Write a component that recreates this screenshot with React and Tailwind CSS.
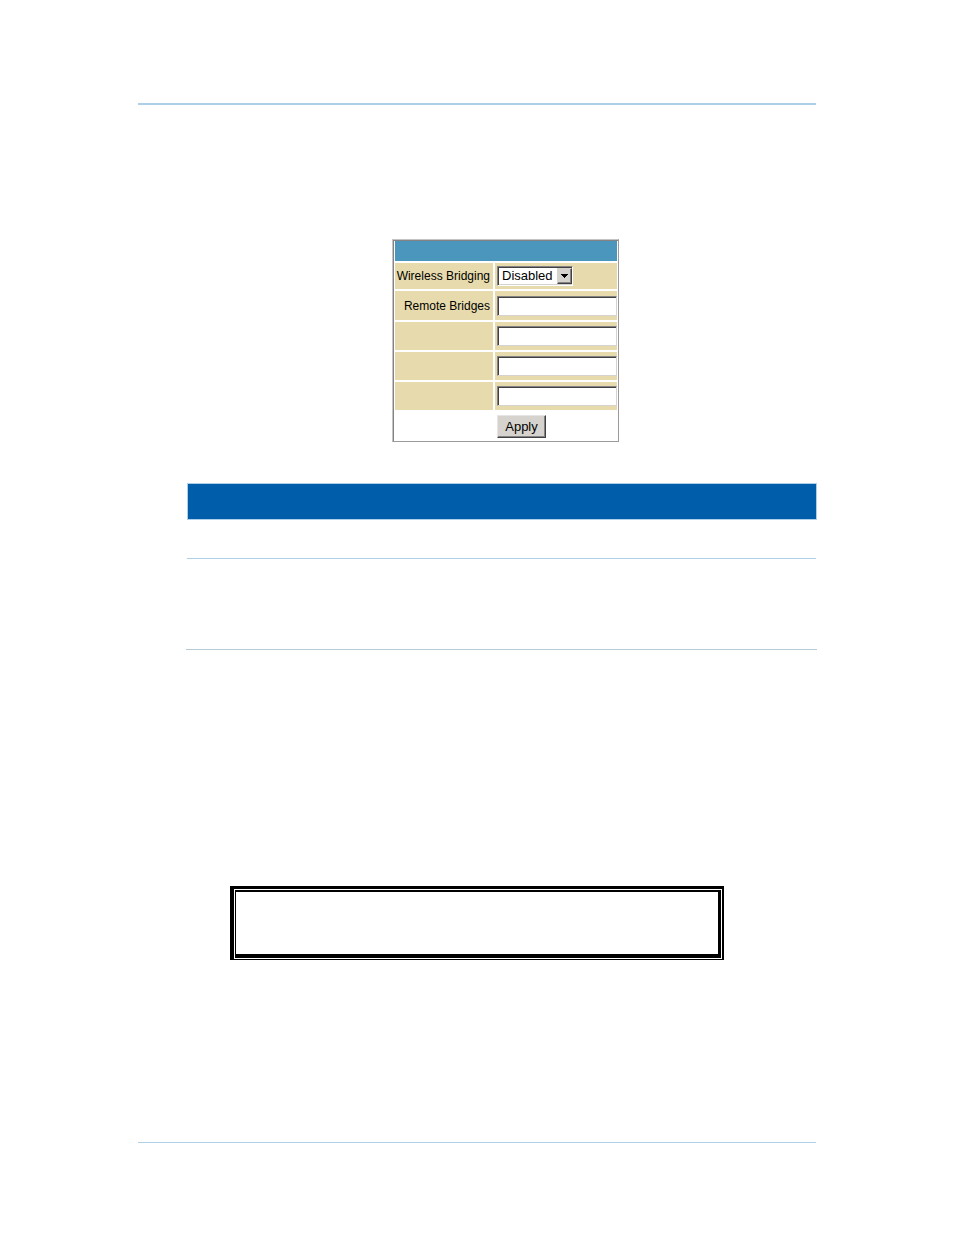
const fieldClass =
  "block h-5 w-full min-w-0 border border-b-[#d6d3ce] border-l-[#848284] border-r-[#d6d3ce] border-t-[#848284] bg-white px-1 text-[13px] text-black shadow-[inset_1px_1px_0_#424142] outline-none";

const labelCell = "flex items-center justify-end bg-[#e7dbad] pr-[3px] text-[12px] leading-4 whitespace-nowrap";
const fieldCell = "flex items-center bg-[#e7dbad] pl-[2px]";

function BridgeRow({ index, label }) {
  const id = `bridge-${index}`;
  return (
    <>
      <div className={labelCell}>{label && <label htmlFor={id}>{label}</label>}</div>
      <div className={fieldCell}>
        <input id={id} type="text" aria-label={label ? undefined : `Remote bridge ${index}`} className={fieldClass} />
      </div>
    </>
  );
}

function BridgingForm() {
  return (
    <form
      className="w-[227px] border border-b-[#9c9a9c] border-l-[#c6c3c6] border-r-[#9c9a9c] border-t-[#c6c3c6]"
      onSubmit={(e) => e.preventDefault()}
    >
      <div className="border-t border-l border-[#848284] pr-px pl-px">
        <div className="grid grid-cols-[98px_1fr] grid-rows-[20px_26px_29px_28px_28px_28px_29px] gap-[2px]">
          <div className="col-span-2 bg-[#4a96bd]" />
          <div className={labelCell}>
            <label htmlFor="bridging">Wireless Bridging</label>
          </div>
          <div className={fieldCell}>
            <div className="relative h-5 w-[76px]">
              <select
                id="bridging"
                defaultValue="Disabled"
                className="block h-full w-full appearance-none border border-b-white border-l-[#848284] border-r-white border-t-[#848284] bg-white pl-1 text-[13px] leading-4 text-black shadow-[inset_1px_1px_0_#424142,inset_-1px_-1px_0_#d6d3ce] outline-none"
              >
                <option>Disabled</option>
                <option>Enabled</option>
              </select>
              <span className="pointer-events-none absolute top-[2px] right-px bottom-[2px] flex w-[15px] items-center justify-center border border-b-[#424142] border-l-[#d6d3ce] border-r-[#424142] border-t-[#d6d3ce] bg-[#d6d3ce] shadow-[inset_-1px_-1px_0_#848284]">
                <svg width="7" height="4" viewBox="0 0 7 4" shapeRendering="crispEdges" aria-hidden="true">
                  <path d="M0 0h7v1H6v1H5v1H4v1H3V3H2V2H1V1H0z" fill="#000" />
                </svg>
              </span>
            </div>
          </div>
          <BridgeRow index={1} label="Remote Bridges" />
          <BridgeRow index={2} />
          <BridgeRow index={3} />
          <BridgeRow index={4} />
          <div />
          <div className="flex items-center pl-[2px]">
            <button
              type="submit"
              className="h-[23px] w-[49px] border border-b-[#424142] border-l-[#e7e3e7] border-r-[#424142] border-t-[#e7e3e7] bg-[#d6d3ce] text-[13px] leading-4 text-black shadow-[inset_-1px_-1px_0_#848284]"
            >
              Apply
            </button>
          </div>
        </div>
      </div>
    </form>
  );
}

export default function App() {
  return (
    <main className="min-h-screen bg-white px-[138px] pt-[103px] pb-[92px] font-['Liberation_Sans',Arial,sans-serif] text-black">
      <div className="h-[2px] bg-[#adcfe7]" />
      <div className="ml-[49px] flex justify-center pt-[134px] pl-2">
        <BridgingForm />
      </div>
      <section className="-mr-px ml-12 pt-[41px]">
        <div className="ml-px h-[37px] border border-[#adcfe7] bg-[#005daa]" />
        <div className="mr-px ml-px h-[39px] border-b border-[#adcfe7]" />
        <div className="h-[91px] border-b border-[#b5cbd6]" />
      </section>
      <div className="mt-[236px] mr-[92px] ml-[92px] border-t-[3px] border-r-2 border-b border-l-4 border-black p-px">
        <div className="h-[68px] border-t-2 border-r-[3px] border-b-4 border-l border-black" />
      </div>
      <div className="mt-[182px] h-px bg-[#adcfe7]" />
    </main>
  );
}
